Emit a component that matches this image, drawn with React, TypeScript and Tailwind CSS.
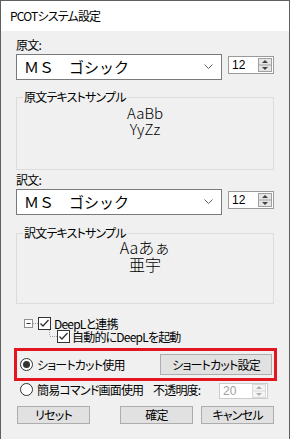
import React from "react";

const jp = "font-['Noto_Sans_CJK_JP',sans-serif] [font-feature-settings:'palt'] tracking-[-0.8px]";

function Chevron() {
  return (
    <svg width="9" height="6" viewBox="0 0 9 6" className="block">
      <polyline points="0.5,0.5 4.5,4.5 8.5,0.5" fill="none" stroke="#606060" strokeWidth="1" />
    </svg>
  );
}

function SpinArrows({ disabled }: { disabled?: boolean }) {
  const c = disabled ? "#b0b0b0" : "#404040";
  const border = disabled ? "#d9d9d9" : "#a0a0a0";
  const bg = disabled ? "#f4f4f4" : "#e6e6e6";
  return (
    <svg width="14" height="14" viewBox="0 0 14 14" className="block">
      <rect x="0.5" y="0.5" width="13" height="13" fill={bg} stroke={border} />
      <line x1="1" y1="7" x2="13" y2="7" stroke={border} />
      <polygon points="4,5 10,5 7,2" fill={c} />
      <polygon points="4,9 10,9 7,12" fill={c} />
    </svg>
  );
}

function Spin({ value, disabled, w }: { value: string; disabled?: boolean; w: string }) {
  return (
    <div
      className={`${w} h-full flex items-center justify-between border ${
        disabled ? "border-[#cccccc] text-[#a0a0a0]" : "border-[#9a9a9a] text-black"
      } bg-white pl-[3px] pr-[1px]`}
    >
      <span className="text-[12px] leading-[14px] tracking-normal font-['Liberation_Sans',sans-serif]">{value}</span>
      <SpinArrows disabled={disabled} />
    </div>
  );
}

function Combo() {
  return (
    <div className="w-[206px] h-[26px] bg-white border border-[#7a7a7a] flex items-center justify-between pl-[7px] pr-[8px]">
      <span className="font-['Noto_Sans_CJK_JP',sans-serif] [font-feature-settings:normal] tracking-normal text-[15px] leading-[20px] text-black">
        ＭＳ　ゴシック
      </span>
      <Chevron />
    </div>
  );
}

function CheckBox() {
  return (
    <svg width="13" height="13" viewBox="0 0 13 13" className="block shrink-0">
      <rect x="0.5" y="0.5" width="12" height="12" fill="white" stroke="#333333" />
      <polyline points="2.5,6.5 5,9 10.5,3" fill="none" stroke="#333333" strokeWidth="1.3" />
    </svg>
  );
}

function Radio({ checked }: { checked?: boolean }) {
  return (
    <svg width="13" height="13" viewBox="0 0 13 13" className="block shrink-0">
      <circle cx="6.5" cy="6.5" r="6" fill="white" stroke="#333333" />
      {checked && <circle cx="6.5" cy="6.5" r="3.5" fill="#333333" />}
    </svg>
  );
}

function Btn({ children, w, h }: { children: React.ReactNode; w: string; h: string }) {
  return (
    <div className={`${w} ${h} bg-[#e1e1e1] border border-[#adadad] flex items-center justify-center text-[12px] leading-[14px] text-black`}>
      {children}
    </div>
  );
}

export default function App() {
  return (
    <div className={`w-[290px] h-[439px] overflow-hidden border-x border-t border-[#5f5f5f] bg-[#f0f0f0] flex flex-col text-black ${jp}`}>
      <div className="h-[30px] shrink-0 bg-white flex items-center pl-[9px] text-[12px] leading-[14px]">
        PCOTシステム設定
      </div>
      <div className="flex flex-col pl-[15px]">
        <div className="mt-[7px] h-[14px] text-[12px] leading-[14px]">原文:</div>
        <div className="mt-[2px] flex items-start h-[26px]">
          <Combo />
          <div className="ml-[6px] mt-[2px] h-[18px]">
            <Spin value="12" w="w-[46px]" />
          </div>
        </div>
        <fieldset className="mt-[10px] w-[258px] h-[80px] border border-[#dcdcdc] px-[6px]">
          <legend className="px-[1px] text-[12px] leading-[14px]">原文テキストサンプル</legend>
          <div className="mt-[1px] text-center text-[15px] leading-[16px] font-light tracking-normal [font-feature-settings:normal]">
            <div>AaBb</div>
            <div>YyZz</div>
          </div>
        </fieldset>
        <div className="mt-[3px] h-[14px] text-[12px] leading-[14px]">訳文:</div>
        <div className="mt-[2px] flex items-start h-[26px]">
          <Combo />
          <div className="ml-[6px] mt-[2px] h-[18px]">
            <Spin value="12" w="w-[46px]" />
          </div>
        </div>
        <fieldset className="mt-[11px] w-[258px] h-[78px] border border-[#dcdcdc] px-[6px]">
          <legend className="px-[1px] text-[12px] leading-[14px]">訳文テキストサンプル</legend>
          <div className="-mt-[1px] text-center text-[16px] leading-[17px] font-light tracking-normal [font-feature-settings:normal]">
            <div>Aaあぁ</div>
            <div>亜宇</div>
          </div>
        </fieldset>

        <div className="mt-[13px] flex flex-col">
          <div className="h-[13px] flex items-center ml-[8px]">
            <svg width="14" height="13" viewBox="0 0 14 13" className="block shrink-0">
              <rect x="0.5" y="2.5" width="8" height="8" fill="white" stroke="#919191" />
              <line x1="2.5" y1="6.5" x2="6.5" y2="6.5" stroke="#333333" />
              <line x1="9" y1="6.5" x2="14" y2="6.5" stroke="#a0a0a0" strokeDasharray="1 1" />
            </svg>
            <CheckBox />
            <span className="ml-[3px] text-[12px] leading-[13px]">DeepLと連携</span>
          </div>
          <div className="h-[13px] flex items-center ml-[8px]">
            <svg width="33" height="13" viewBox="0 0 33 13" className="block shrink-0">
              <line x1="25.5" y1="0" x2="25.5" y2="6" stroke="#a0a0a0" strokeDasharray="1 1" />
              <line x1="26" y1="6.5" x2="33" y2="6.5" stroke="#a0a0a0" strokeDasharray="1 1" />
            </svg>
            <CheckBox />
            <span className="ml-[2px] text-[12px] leading-[13px]">自動的にDeepLを起動</span>
          </div>
        </div>

        <div className="mt-[5px] -ml-[2px] w-[263px] h-[33px] border-[3px] border-[#e3161f] flex items-center justify-between pl-[3px]">
          <div className="flex items-center">
            <Radio checked />
            <span className="ml-[4px] text-[12px] leading-[14px]">ショートカット使用</span>
          </div>
          <div className="mr-[2px]">
            <Btn w="w-[112px]" h="h-[21px]">ショートカット設定</Btn>
          </div>
        </div>

        <div className="mt-[2px] h-[16px] flex items-start ml-[4px]">
          <Radio />
          <span className="ml-[4px] w-[107px] whitespace-nowrap text-[12px] leading-[14px]">簡易コマンド画面使用</span>
          <span className="ml-[9px] w-[57px] whitespace-nowrap text-[12px] leading-[14px]">不透明度:</span>
          <div className="ml-[9px] h-[16px]">
            <Spin value="20" disabled w="w-[49px]" />
          </div>
        </div>

        <div className="mt-[7px] flex ml-[1px]">
          <Btn w="w-[73px]" h="h-[18px]">リセット</Btn>
          <div className="ml-[30px]">
            <Btn w="w-[73px]" h="h-[18px]">確定</Btn>
          </div>
          <div className="ml-[8px]">
            <Btn w="w-[73px]" h="h-[18px]">キャンセル</Btn>
          </div>
        </div>
      </div>
    </div>
  );
}
